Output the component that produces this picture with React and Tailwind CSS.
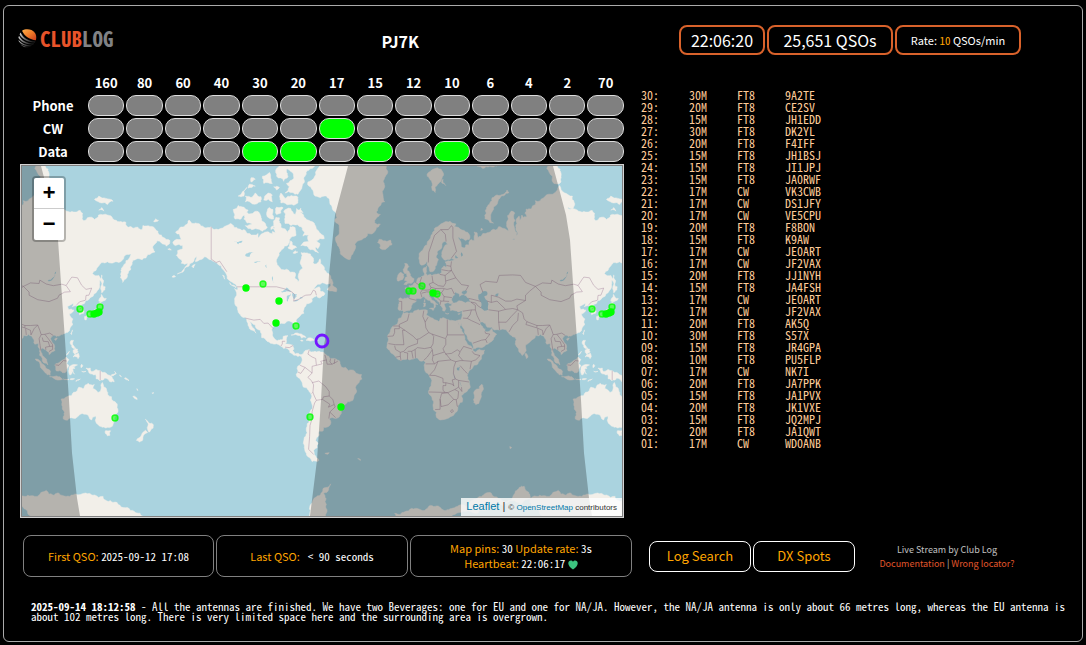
import React, { useState } from 'react';

const bands = ['160', '80', '60', '40', '30', '20', '17', '15', '12', '10', '6', '4', '2', '70'];

const modes = [
    { name: 'Phone', active: [] },
    { name: 'CW', active: ['17'] },
    { name: 'Data', active: ['30', '20', '15', '10'] },
];

const qsos = [
    ['30', '30M', 'FT8', '9A2TE'],
    ['29', '20M', 'FT8', 'CE2SV'],
    ['28', '15M', 'FT8', 'JH1EDD'],
    ['27', '30M', 'FT8', 'DK2YL'],
    ['26', '20M', 'FT8', 'F4IFF'],
    ['25', '15M', 'FT8', 'JH1BSJ'],
    ['24', '15M', 'FT8', 'JI1JPJ'],
    ['23', '15M', 'FT8', 'JA0RWF'],
    ['22', '17M', 'CW', 'VK3CWB'],
    ['21', '17M', 'CW', 'DS1JFY'],
    ['20', '17M', 'CW', 'VE5CPU'],
    ['19', '20M', 'FT8', 'F8BON'],
    ['18', '15M', 'FT8', 'K9AW'],
    ['17', '17M', 'CW', 'JE0ART'],
    ['16', '17M', 'CW', 'JF2VAX'],
    ['15', '20M', 'FT8', 'JJ1NYH'],
    ['14', '15M', 'FT8', 'JA4FSH'],
    ['13', '17M', 'CW', 'JE0ART'],
    ['12', '17M', 'CW', 'JF2VAX'],
    ['11', '20M', 'FT8', 'AK5Q'],
    ['10', '30M', 'FT8', 'S57X'],
    ['09', '15M', 'FT8', 'JR4GPA'],
    ['08', '10M', 'FT8', 'PU5FLP'],
    ['07', '17M', 'CW', 'NK7I'],
    ['06', '20M', 'FT8', 'JA7PPK'],
    ['05', '15M', 'FT8', 'JA1PVX'],
    ['04', '20M', 'FT8', 'JK1VXE'],
    ['03', '15M', 'FT8', 'JQ2MPJ'],
    ['02', '20M', 'FT8', 'JA1QWT'],
    ['01', '17M', 'CW', 'WD0ANB'],
];

// Coastlines as "lon,lat" rings
const land = [
    // Eurasia
    '-9,37 -9.5,38.7 -8.8,41.5 -9.2,43.1 -8,43.7 -4,43.4 -1.8,43.4 -1.2,44.8 -1.2,46 -2.5,47.3 -4.6,48 -4.6,48.6 -1.6,48.7 -1.9,49.7 -1.2,49.4 0.2,49.6 1.6,50.8 3.5,51.4 4.7,53 7,53.5 8.8,53.9 8.2,55.5 8.3,57 10.6,57.7 10.3,56.3 9.9,54.9 11,54 12.5,54.4 14.2,53.9 16.5,54.5 18.6,54.7 19.8,54.4 21,55.3 21.2,57 22.6,57.7 24.2,57.1 24.3,58.3 23.5,59.2 25.5,59.6 28,59.6 30,60 28,60.6 25,60.1 22.9,59.9 21.4,60.8 21.4,62.8 25.3,65 24,65.8 22,65.6 21.3,64.5 17.8,62.6 17.2,60.8 18.8,60 17.8,58.8 16.5,57.5 15.9,56.1 14.3,55.5 12.9,55.5 11.8,57.5 11,59 10.5,59.4 8.5,58.2 7,58 5.6,58.8 5,60.5 5.2,62 8.2,63.6 10.8,64.8 12.7,66.5 14.5,67.8 16,68.8 19,69.9 23,70.8 27,71 31,70.4 30,69.8 33,69.5 38,68.4 41,67 40.5,66.4 38,66.1 34,66.6 32.5,67.1 34.8,65 34.8,64.3 37,63.9 38,64.8 40,64.7 40.2,65.5 42,66.4 44,66.1 43.9,68.4 46,68.2 46.5,66.8 50,68 54,68.3 59,68.9 61,69.7 64.9,69.3 68.5,68.3 67,69.6 67,71 70,73.2 72.5,72.8 72.7,71.2 72.5,69 74,68.2 73.5,67 70.5,66.4 72.2,66.2 74.5,67.9 74,70.5 73.5,71.5 75.5,72.2 76,71.2 77.5,72.4 78.5,70.9 79,72 81,72 80.5,73.6 87,74.5 87,75.2 98,76.3 104,77.7 113,76 113.5,73.7 110,74 106,73 110,73.7 118.5,73.1 123.5,73 127,73.3 128.5,72 129,71.2 132,71.8 137,71.4 139.8,72.4 146,72.4 150,71.5 159,70.8 160,69.7 167.5,69.6 170.5,69 171,70 176,69.8 180,69 185,67 190,66.1 187.5,64.4 184,65.4 181,66 178,64.4 179.5,62.6 174.5,61.8 170.5,60 166.5,60.2 164,59.8 163,58 162.3,56.2 160,54.5 159.9,53.2 156.8,51 155.6,55 156,57 158.5,58.5 161,60.2 164,62.4 160,61.8 155,59.2 151,59.1 146,59.3 142,59 138,56 135.5,54.7 140,54 141.3,52.5 140.5,50 140,48 136,44.5 133,42.8 130.7,42.3 127.5,39.8 129.3,37.2 129.2,35.3 126.5,34.4 126.5,37 125,38 125,39.6 121.3,39 122,40.8 118,39.1 119,37.3 122.4,37.2 119.3,35 121.8,32 121,30 121.5,28.3 119.5,25.5 117,23.5 113.5,22.2 110,21 109.8,21.5 108,21.6 106,19.5 107.3,17 109,14 109.2,11.5 106.8,10.4 105,8.7 105,10.2 102.5,12 101,13 100,13.3 99.3,10.5 100.3,8.3 102.5,6.2 103.4,4 104.2,1.4 101.3,2.9 100.3,6 98.3,8.2 98.6,12 97.6,16.3 95,15.8 94.3,17 94.3,19 92,21.5 90.5,22.6 87,21.4 86.8,20.2 82.3,16.7 80.2,15.5 80.2,13 79.8,10.3 77.6,8 76.3,10 74.7,13.3 73,17 72.8,20.5 70.9,20.8 69,22.2 67.3,24 66.5,25.3 61.6,25.1 57.3,25.7 56.3,27 52.5,27.5 50,30.2 48,30 48,29.4 50,26.7 51.2,24.6 51.5,26 52,24.1 54.5,24.2 56.3,26.2 56.8,24.2 59.8,22.4 57.5,19 55,17 52,15.5 45,12.8 43.3,12.7 42.7,16 39,21 37.2,24.8 35,28 34.8,29.5 34.3,27.9 32.5,29.9 32.5,31.2 34.3,31.3 35.5,34 36,36.8 32.5,36.1 30.5,36.7 27.3,36.8 26.3,39.3 29,41 31.5,41.3 35,42 38,41 41.5,41.5 39,43.9 37,45 39,47.2 35,46.3 36.5,45.4 33.7,44.4 32.8,46 30.8,46.5 28.7,44 28,42.5 29,41.3 27,40.6 24,40.8 22.8,40.4 24,38 23,36.5 21.7,36.9 21,39 19.4,41.5 16,43.5 14.8,45 13.6,45.5 12.3,45.3 12.4,44.2 14,42.5 16,41.9 18.5,40.2 17,40.4 16.8,39 15.7,38 15.8,40 13.5,41.2 10.5,43 8.8,44.4 6.5,43.2 3.2,43.3 3.2,41.9 0.7,40.8 -0.3,39.3 -0.7,37.7 -2.2,36.8 -5.5,36.1 -6.4,36.9',
    // Africa
    '-6,35.8 -2,35.1 3,36.9 9.8,37.3 11,37 10.2,34.3 15,32.4 19,30.4 20,32.3 22,32.8 25,31.6 29,31 32.3,31.2 32.5,29.9 34,26.5 35.7,23.8 37.2,21 37.4,18.8 39.5,15.5 43,12.5 43.2,11.6 45,10.5 51.2,11.9 50.8,9.3 48,4.5 43,-0.2 40,-3.5 39,-6 40.6,-10.8 40.6,-15 36.9,-17.9 34.8,-19.8 35.5,-24 32.7,-26 32.4,-28.5 30,-31.3 26,-33.8 20,-34.8 18.4,-34 17.5,-30.5 15,-26.5 14.5,-22.5 11.8,-18 13.8,-11 12.2,-5.8 9,-1.2 9.7,3 8.5,4.6 5.8,4.3 4,6.3 -1.5,5 -4.5,5.2 -7.6,4.4 -11,6.5 -13.2,9 -16.6,12.3 -17.4,14.7 -16.3,19 -17,21 -14.8,25.5 -12.9,27.9 -9.8,29.8 -9.5,32 -6.8,34',
    '49.3,-12 50.4,-15.5 47.2,-24.8 45,-25.5 43.4,-22.5 44.4,-16.3 47.5,-15.2',
    // North America
    '-168,65.6 -162,66.4 -166,68.4 -163,69.5 -156.5,71.3 -150,70.5 -141,69.7 -136,69 -130,70 -127.5,70.5 -125,69.6 -118,69 -114,68 -108,68 -108,66.8 -105,68 -98,67.8 -98,68.5 -96,68.2 -97,70 -95.5,71.9 -93,71.8 -92,69.5 -90.5,69.3 -88,68.7 -87,67.4 -85.5,69.7 -82,69.5 -81.3,67.5 -86,66.3 -87,64.8 -91,63.5 -94.5,60.5 -94.7,58.8 -92.5,57 -88,56.5 -82.3,55.2 -82.2,52.9 -80,51.2 -79,52 -79.5,54.6 -76.6,57 -78.5,58.8 -77.5,60.5 -77.8,62.4 -73.5,62.3 -70,61 -69.5,59 -67,58.5 -64.5,60.3 -61.8,57.5 -60,55.3 -57,53.7 -55.8,52 -60,50.2 -66,50.2 -70,47 -65,49 -64.5,47 -61,45.7 -65,43.6 -67,44.8 -70.5,43.3 -70,41.7 -74,40.6 -75.8,37.5 -75.8,35.3 -78.5,33.8 -81.3,31.3 -80.1,27 -80.5,25.2 -81.8,26 -82.7,28.5 -84,30 -88,30.3 -89.3,29.2 -91.5,29.4 -94.5,29.4 -97.3,27.5 -97.7,23 -96.3,19.3 -94.5,18.2 -91,18.7 -90.4,21 -87,21.5 -88,18 -88.8,15.9 -83.3,15 -83.7,11.5 -82,9 -79.5,9.5 -77.5,8.6 -77.8,7.5 -80,7.3 -83,8.3 -85.8,10.2 -87.6,13 -92,14.4 -95,16.1 -97,15.9 -101.5,17.7 -105.5,20.2 -105.5,22.6 -109,26 -112.5,29.7 -114.8,31.8 -112.8,28 -109.5,23.1 -112,25 -115,28 -115.9,30.5 -117.3,33 -120.6,34.6 -122.5,37.5 -124.3,40.4 -124,44 -124.6,48.2 -122.5,47.5 -123,49.2 -127.5,51.5 -130.3,54.5 -134,57.8 -137,58.9 -141,60 -146,61 -149,60 -152,59.3 -151,61.2 -154,59 -157,57.5 -162,55.2 -164.8,54.6 -160,56 -157.5,58.7 -162,58.7 -162,60 -165.5,61.5 -164.5,63.1 -161,63.6 -161,64.6 -166.3,64.6',
    '-90,73 -89,70.5 -85,70 -79,69.8 -76,68.6 -72.5,67.6 -72.5,65.8 -78,64.5 -74,64.5 -70,63.4 -68,62.8 -65.5,62.3 -68,64 -66,63.6 -64.5,65.2 -67,66 -61.5,66.6 -64,68 -67,69.2 -71,71 -74,71.4 -77,72.7 -81,73.7 -82,72.5 -85,73.7',
    '-105,68.6 -115,69.3 -117,70 -112,70.4 -118,71.5 -117,73 -112,72.7 -108,73.1 -105,71 -101.5,69.6',
    '-124,71.5 -125.5,73.5 -122,74.3 -115,73.4 -120,71.5',
    '-97,71.5 -102,72.5 -100,73.9 -97.5,73.5',
    '-95,72.5 -95,74 -90.5,73.9 -92,72.8',
    '-80,74.8 -86,74.5 -92,74.8 -92,76.5 -89,75.6 -80,75.8',
    '-106,75 -112,74.6 -117,75 -117,76 -112,75.8 -110,76.5 -106,75.9',
    '-98,75 -104,75.3 -101,76.5 -98,76.2',
    '-80,76.3 -84,76.6 -89,76.5 -86,77.5 -88,78 -83,78.7 -86,79.8 -92,80.5 -90,83 -60,83 -65,81 -71,80 -75,79 -77,77.6',
    '-87,79 -90,78.3 -95,79 -95,80 -91,81.3 -88,80.4',
    '-104,78 -98,78 -100,79.5 -105,79',
    '-113,78.2 -110,78.6 -113,78.8',
    '-122,76 -116,77.4 -118,76',
    '-115,77.3 -110,77.6 -114,77.9',
    '-95,77 -97,77.5 -93,77.4',
    '-99,69 -96,69.4 -98,69.9',
    '-76.5,67.3 -73.5,67.6 -75,68.3',
    '-79.5,73.2 -76.3,72.9 -78,73.8',
    '-87,64 -84,63.2 -81,64 -84,65 -85,66',
    '-83.5,62.3 -80,62.6 -82,63',
    '-59.3,47.7 -57,50.5 -55.6,51.5 -55.8,49.8 -53,48.5 -53,46.7 -55.5,47',
    '-128,50.9 -124,49.3 -123.5,48.4 -126,49.4',
    '-133,54.1 -131.8,53.8 -131.5,52.4',
    '-154.5,57.5 -152.3,58.3 -153.5,57',
    '-166,53.5 -168.5,53.3 -167,54',
    '-171.5,63.5 -169,63.2 -170,63.7',
    // Caribbean
    '-84.8,21.9 -82,23.2 -79,22.7 -74.3,20.3 -77.5,19.9 -78,21 -81.8,22.3',
    '-74.3,18.5 -73,19.9 -69.8,19.7 -68.5,18.5 -71.3,17.9',
    '-78.2,18.3 -76.3,18.1 -77.2,17.8',
    '-67.1,18.4 -65.7,18.3 -67,18',
    // Greenland, Iceland
    '-73,78.2 -68,76 -60,76 -56,74 -54,71 -51,69.5 -53.5,67 -52,64.5 -49,61.5 -44,60 -43,60.2 -41,62.5 -40,65 -35,66.3 -31,68 -26,68.5 -22,70.3 -26,70.6 -22,72.5 -25,73 -19,75 -20,77 -18,80 -18,83 -60,83 -66,80',
    '-22.5,63.9 -18.5,63.4 -14,64.8 -15,66.2 -20,66 -23,66.4 -24,65.5 -22,64.8',
    // South America
    '-77.5,8.6 -75.5,10.8 -72,12.2 -71.5,10.8 -68,11 -64,10.4 -61.5,10 -60,8.4 -57,6 -52,4.8 -50,1.5 -49.5,0 -44.5,-2.7 -40,-3 -35.3,-5.3 -35,-8.5 -39,-13 -39,-17.8 -41,-22 -45,-23.5 -48.6,-26 -49,-28.8 -53.5,-34 -58,-34.3 -56.8,-36.5 -58,-38.2 -62,-39 -62.3,-41 -65,-41 -65,-43 -67.5,-46 -65.8,-47.3 -69,-50.5 -68.5,-52.3 -65.3,-54.8 -70,-55.2 -74,-52.5 -75.5,-48 -73.5,-42 -73.5,-37 -71.5,-30 -70.2,-20 -76.2,-14 -79.8,-7.5 -81.2,-5 -80,-2.5 -80,0.7 -77.3,3.8',
    '-61,-51.8 -58,-51.5 -59,-52.2',
    '-38,-54 -36,-54.4 -36.2,-54.8',
    // British Isles
    '-5.5,50.1 -3,51.4 -5,51.8 -4.3,53.2 -3,53.5 -3.5,54.8 -5,54.8 -6,56.5 -5,58.6 -3,58.5 -2,57.5 -3.2,56 -1.5,55 0.3,53 1.7,52.6 1,51.2 -2,50.7',
    '-10,51.6 -9.8,54 -7.5,55.3 -5.6,54.5 -6.3,52.3',
    // Arctic islands
    '11,79 14,77.5 16.5,76.6 19,78 22,79.5 18,80.1 14,79.8',
    '21,78.1 24,77.7 22,78.6',
    '51.5,71.6 55,70.7 57.5,70.6 55.5,72.4 57.5,74 61,75.4 68.5,76.6 67,77 60,76.2 55,74.8 52.5,72.8',
    '46,80.3 50,80 60,80.3 52,80.8',
    '99,79 95,80 98,80.8 105,79 105,78.2 100,78',
    '137,75.4 142,74.8 150,75.1 145,75.6 140,76',
    '140,73.4 143.5,73.2 142,73.9',
    '178.5,71 182,71.2 180,71.6',
    '48.5,68.8 50,69 49,69.4',
    // Mediterranean islands
    '12.5,38 15.5,38.2 15,36.8',
    '8.3,39 8.3,41 9.7,41 9.5,39.2',
    '8.7,41.6 9.3,42.9 9.4,41.6',
    '23.6,35.4 26.2,35.2 24.8,34.9',
    '32.4,34.9 34.3,35.5 33.5,34.7',
    // East Asia
    '142,54.2 143.2,52 143.3,49.2 144.5,49 142.8,46.6 142,46.1 142,50',
    '140,42 140.5,43.4 141.8,45.4 145.3,43.4 143.2,42.1',
    '140,41 141.4,41.3 142,39.5 140.8,36 140,35.2 137,34.7 135.8,33.5 135,34.6 131,34 132.5,35.5 136,35.8 137,37.4 139.5,38.4',
    '130,33.4 131.8,33.5 131.2,31.4 130.2,31.4',
    '132.5,33.8 134.5,34.2 133.2,33',
    '120.2,23 121.5,25.2 120.9,22.2',
    '108.8,19.2 110.8,20 109.8,18.3',
    '120.5,18.4 122.2,18.4 121.5,15.8 124,13 121,13.8 120,16',
    '122,11.8 125,12.5 125.5,10.5 123,9.2',
    '122,7 125.5,9.8 126.3,7.2 125.4,5.8 124,7.2',
    '117.2,8.4 119.3,11 119,10.3',
    '79.8,8 80.3,9.7 81.8,7.5 80.6,6',
    // Indonesia, New Guinea
    '109,1.5 111.3,2.6 114,4.6 117,7 119,5.2 117.5,2.5 119,1 116.3,-4 114.5,-4 110.2,-2.8',
    '95.3,5.6 97.5,5.2 100.5,2.2 104,-1.5 106,-3 105.8,-5.8 102.2,-4 98.7,1.6',
    '105.3,-6.8 108.5,-6.7 112.5,-6.8 114.5,-8.6 108,-7.8',
    '115,-8.4 119,-8.4 119,-8.9 116,-8.9',
    '120,-8.3 123,-8.3 120,-8.9',
    '124,-9.3 127,-8.4 124,-10.2',
    '119.5,-5.5 118.8,-2.8 120,0.8 125,1.5 121,0.3 123.3,-0.9 121.6,-1.5 123,-5 121,-2.8 120.4,-5.5',
    '127.5,-0.5 128,2 128.7,1',
    '128,-3 131,-3 129,-3.5',
    '131,-0.8 134,-0.8 135,-3.3 138,-1.7 141,-2.6 145,-4.3 147.8,-6 150.8,-10.4 147,-9.2 144,-7.7 143,-9.2 138,-8.2 137.8,-5.3 133,-4',
    '148.5,-5.8 152,-4.2 151,-3 152.3,-4.8 150,-6.3',
    '154.7,-5.5 156,-6.8 155,-6.4',
    '158,-7.8 161,-9.8 159,-8.8',
    '164,-20.2 167,-22.3 165,-21.5',
    '177.3,-18 178.7,-17.8 178,-18.3',
    '166.8,-15 167.5,-16.4 167,-16',
    // Australia, New Zealand
    '113.5,-22 114,-26 115.8,-32 115,-34.3 118,-35 123.5,-34 126,-32.3 131,-31.5 135,-34.8 137.8,-32.5 137.5,-35 140,-38 143.5,-38.8 146.3,-39 150,-37.5 151.5,-33 153.5,-29 153,-25.5 149,-20.5 146.2,-18.8 145.3,-15 143.5,-14 142.5,-10.8 141.5,-13 141,-17 139.5,-17.6 135.8,-15 136.8,-12.2 132.5,-11.3 130.5,-12.5 129.5,-15 126,-14 122.2,-17.5 121,-19.6 117,-20.7',
    '144.7,-40.8 148.3,-40.9 147.8,-43.2 146,-43.5',
    '172.7,-34.5 175.3,-36.6 178.4,-37.7 176.5,-40.5 175.2,-41.6 174,-39.2 174.8,-37.5',
    '172.7,-40.6 174.2,-41.8 171,-44.3 170.5,-46 168.5,-46.6 166.5,-45.8 170,-43',
    '69,-48.7 70.3,-49.2 69.2,-49.7',
    // Antarctica
    '-14,-75 -12,-71.2 -5,-70.8 0,-70 10,-70.2 25,-70.3 33,-69.3 38,-69.5 45,-67.7 49,-67 52,-66 56,-66 58,-67 70,-68 77,-69 80,-67.8 85,-67 90,-66.6 95,-66.9 98,-66.5 101,-65.6 103,-65.2 105,-66.3 112,-66 117,-66.9 122,-66.5 130,-66 137,-66.5 143,-66.9 150,-68.5 160,-69.8 165,-70.7 172,-72 172,-75',
    '-78,-75 -72,-71.8 -71,-69 -67,-67 -62,-64.5 -57,-63.2 -62,-66 -60,-69 -60,-75',
];

const lakes = [
    '47,45.5 50,46.8 53,46.7 53,45 51,44.3 53.5,41.5 53.8,37.3 51,36.7 49,38 49,41',
    '-92,46.7 -88,48.7 -84.6,46.7 -88,46.9',
    '-87.8,42 -87.8,44.5 -85,46 -86.3,43.5 -87,41.7',
    '-84,46 -80.5,45.7 -82.3,43 -83.5,44',
    '-83.3,41.8 -79,42.8 -81.5,41.8',
    '-79.5,43.3 -76.3,44 -78,43.3',
    '104,51.6 108,53.2 110,55.6 109,53.5 106,51.6',
    '31.8,-0.5 34,0.3 33.5,-2.5 32,-2.3',
    '30.8,60.5 32.8,60.6 31,61.6',
    '35,61 36,61.5 34.7,62.5',
    '58.5,45 61,46 60,44.2',
    '-98,53.8 -96.4,50.6 -97.5,52',
    '-117,61.3 -111,62.6 -114,61',
    '-125,66 -119,66 -122,65',
    '-103,57.8 -101.8,57 -102.3,58.3',
    '-111,59.2 -106,59.4 -110,58.8',
    '29.2,-3.8 30.7,-8.5 29.6,-5.5',
    '34,-10 35,-14 34.3,-12',
];

const borders = [
    '-123,49 -95,49 -89,48 -84,46.5 -82.5,45.3 -83,42 -79,43 -76,44.5 -74.5,45 -71,45.2 -69.2,47.4 -67.8,47 -67,45',
    '-141,69.7 -141,60.2 -137.5,59 -135,59.5 -130,55.5',
    '-117,32.5 -111,31.3 -106.5,31.7 -104,29.3 -101,29.5 -97.3,26',
    '-92,14.5 -91,16 -91,17.8 -89,17.8',
    '-89,13.8 -86,13.5 -83.3,15',
    // South America
    '-72,12 -73,9 -70,7 -67.5,6 -67,1.2 -70,0.5 -70,-4.2 -75,-0.3 -78.5,1.2',
    '-80,-3.5 -78,-4.5 -75,-0.3',
    '-67,1.2 -63,2.2 -64,4 -60,5 -61,8.4',
    '-60,5 -59.5,2 -56,2 -52,4',
    '-57,6 -57.5,3.5 -56,2',
    '-54,5.7 -54.5,2.3',
    '-70,-4.2 -73,-7.3 -70.5,-9.5 -69,-12.5 -69.5,-17.5 -70.3,-18.3',
    '-70,-11 -65.3,-9.8 -60.5,-13.7 -58,-17 -58,-20 -62,-20.5 -62.7,-22.2 -67,-22.8 -68.5,-20 -69.5,-17.5',
    '-67,-22.8 -68.3,-24.5 -70,-30 -70,-34 -71.5,-38 -71.8,-44 -72.5,-50 -69,-52.2',
    '-58,-20 -55.5,-22.2 -54.5,-25.5 -58.6,-27.2 -57.6,-25.3 -62.7,-22.2',
    '-54.5,-25.5 -53.8,-27 -57.6,-30.2 -58.3,-34',
    '-57.6,-30.2 -53.5,-33.5',
    // Africa
    '-8.7,27.7 -8.7,28.7 -3,31 -1.8,35',
    '-13,27.7 -8.7,27.7 -8.7,26 -12,26 -12,23.5 -13,21.3 -17,21',
    '-8.7,27.3 -4.8,25 1.2,21 3.2,19 5.5,19.5 12,23.5 10,26.5 9.5,30 7.8,33.5 8.5,36.8',
    '9.5,30 11.5,33',
    '-4.8,25 -6.5,25 -5.5,15.5 -11.5,15.5 -16.3,16.2',
    '4.2,19 4,16.2 0.3,15 -3,13.7 -5.5,11 -8,10.3 -11.3,12.2 -12,14.8',
    '-8,10.3 -8,7.5 -11.3,6.9',
    '-8,7.5 -7.5,4.5',
    '-5.5,10.3 -2.8,9.8 -3,5.2',
    '-2.8,11 0,11 1,6',
    '0,11 2.4,12.2 2.7,6.4',
    '2.4,12.2 4,13.5 9,12.8 13.6,13.7 15,16 15.5,21 14.2,22.6 12,23.5',
    '14.2,22.6 24,19.5 24,15.7 22,12.7 23,10.5 15,8 14.5,12 13.6,13.7',
    '25,31.6 25,22 37,22',
    '25,22 24,20',
    '14.5,12 11,7 8.6,4.8',
    '15,8 14.5,5 16,2.2 9.8,2.2',
    '16,2.2 18.5,4 27.5,5 23,10.5',
    '27.5,5 31,3.7 34,4.5 36,4.5 33,8 34,10.7 36.5,14.3 42.5,12.5',
    '23.5,9 28,9.5 32,12 34,10.7',
    '36,4.5 42,4 45,5 48,8 44,9 42.5,11',
    '42,4 41,-1.5',
    '34,1 37.5,-3 39.3,-4.7',
    '31,3.7 29.7,0 29.3,-4.5 30.7,-8.4 33,-9.4 40.3,-10.5',
    '18.5,4 16,-2 12.5,-5.8',
    '12.5,-5.8 16.5,-6 19.5,-7 22,-8 22,-11 24,-11 24,-13 22,-13 22,-16.2 23.5,-17.6 12,-17.3',
    '24,-11 28.5,-12 29.7,-13.3 28.5,-9 30.7,-8.4',
    '33,-9.4 33,-14 30.3,-15.6 25.3,-17.8 23.5,-17.6',
    '35,-14 35.3,-17 33,-14',
    '30.3,-15.6 33,-17 32.5,-21.5 31.3,-22.4 29.5,-22.2 25.3,-17.8',
    '29.5,-22.2 25.5,-25.7 20.7,-26.8 20,-22 21,-18.3 25.3,-17.8',
    '20,-22 20,-28.5 16.5,-28.6',
    '31.3,-22.4 32,-26.5 32.7,-27',
    '27.3,-29.5 28.6,-28.7 29.3,-29.8 28,-30.5 27.3,-29.5',
    // Europe
    '-7,37.2 -7,41.8 -8.8,41.9',
    '-1.8,43.3 3.2,42.4',
    '2.5,51 6,49.5 8.2,49 7.5,47.6 6.2,46.3 7.2,44',
    '7,53.3 6,51.5 6,49.5',
    '7.5,47.6 10,47.4 13,47.6 13.5,48.8 12.2,50.3 15,51 14.3,53.8',
    '7,46 10.5,46.6 13.7,46.5 16.2,47 17,48.2 13.5,48.8',
    '15,51 18.8,49.5 22.5,49.2 24,50.8 23.5,54 19.8,54.4',
    '17,48.2 22,48.3 24.8,47.8 28,48.3 30,45.5',
    '16.2,47 18.8,45.8 21,46.2 22.8,48',
    '21,46.2 22.7,44.3 28.3,43.8',
    '22.7,44.3 22.5,42 26.3,41.8',
    '22.5,42 20.5,42 20,40',
    '18.8,45.8 16,45 19,43 20.5,42',
    '23.5,54 28,56 31,53 24,51.6',
    '31,53 35,50 40,49.5 38,47.2',
    '21,56.3 26,55.8 28,56 27.5,57.6 24.5,57.9',
    '27.5,57.6 28,59.4',
    '28,60.6 31.5,62.8 29,66.8 29,69.5',
    '24.2,65.8 23.6,67.8 20.5,69 16,67.5 14,65 12,62.5 11.7,59',
    '20.5,69 25.7,69 28,70 29,69.5',
    // Asia
    '40,43.4 44,42.7 48.5,41.8',
    '41.5,41.5 45,41 46.5,39.5 48.7,38.4',
    '36,36.5 42,37.2 44.8,37.2 44.8,39.7 41.5,41.5',
    '42,37.2 41,34.4 39,32.3 36,32.5',
    '44.8,37.2 46,34 48,30.5',
    '39,32.3 42,31 46.5,29.2 48,28.5',
    '43,16.5 49,18.5 52,19 55,22.5 52,23 51.5,24.3',
    '52,19 53,16.7',
    '50,46.5 48,50 52,51.5 60,51 61.5,54 71,54.2 76.5,54 80,51 87,49.2 83,47 80,45 80,42.3 74,43 70,42 66,42 61,44 56,45 56,41.3 53,42',
    '56,41.3 60,42 66,37.5 61.3,36.5 54,37.3',
    '66,37.5 71,38 74.5,37.3 74,39.5 80,42.3',
    '61,36.5 61,31.5 61.7,25.2',
    '61,30 66.5,30 70,33.5 74.5,37.3 78,35.5 79,32 81,30.3 88,28 92,28 97,28.3',
    '68.5,24 71,28 74.5,31 75,35.5',
    '81,30.3 80.3,28.6 88,26.5 88,28',
    '88.5,26.3 89,22',
    '88.5,26.3 92,25 92.3,22',
    '92.3,22 94.5,26 97,28.3 98.5,25 99.5,22.2 98,19.5 98.7,15 99.3,11.5',
    '99.5,22.2 102,22.4 105.5,23.2 108,21.6',
    '102,22.4 104.5,19.5 107.5,15.5 107.5,12.3 105,10.8',
    '100.2,20.3 101,17.8 104.5,17.5 105.5,14.3 102.5,13.8 102.8,12',
    '105.5,14.3 107.5,14.5',
    '87,49.2 92,50.8 98,50.5 98.5,52 103,50.3 108,49.5 114,50.2 117,49.6 120,52.5 121,53.3 125,53 128,49.7 131,47.8 135,48.4 133,45 131,44.9 130.7,42.5',
    '87,49.2 91,46.5 91,45 97,42.7 105,41.7 111,43.5 112,45 116,46.5 120,46.7 117,49.6',
    '130.5,42.4 126.5,41.6 124.5,40',
    '126.7,37.8 128.4,38.5',
    '109.5,1.5 112,1.2 115,4.5 117.5,4.2',
    '141,-2.6 141,-9.1',
];

const WORLD = 512;

// Web mercator at zoom 1
const project = ([lon, lat]) => {
    const rad = (lat * Math.PI) / 180;
    return [
        389.7 + (lon * WORLD) / 360,
        201 - (WORLD / (2 * Math.PI)) * Math.log(Math.tan(Math.PI / 4 + rad / 2)),
    ];
};

// Stable pseudo random value between -0.5 and 0.5
const noise = (x, y) => {
    const n = Math.sin(x * 12.9898 + y * 78.233) * 43758.5453;
    return n - Math.floor(n) - 0.5;
};

// Split long edges and nudge the midpoints so coasts are not ruler straight
const roughen = (a, b) => {
    const dx = b[0] - a[0];
    const dy = b[1] - a[1];
    if (Math.hypot(dx, dy) < 2.5) return [a];
    const k = noise(a[0] + b[0], a[1] + b[1]) * 0.42;
    const mid = [(a[0] + b[0]) / 2 - dy * k, (a[1] + b[1]) / 2 + dx * k];
    return [...roughen(a, mid), ...roughen(mid, b)];
};

const toPath = (rings, coast) =>
    rings
        .map(ring => {
            let points = ring.split(' ').map(pair => project(pair.split(',').map(Number)));
            if (coast) {
                points = points.flatMap((p, i) => roughen(p, points[(i + 1) % points.length]));
            }
            const d = points.map(([x, y]) => `${x.toFixed(1)} ${y.toFixed(1)}`).join('L');
            return `M${d}${coast ? 'Z' : ''}`;
        })
        .join('');

const landPath = toPath(land, true);
const lakePath = toPath(lakes, true);
const borderPath = toPath(borders, false);

const pins = [
    { x: 224, y: 122, solid: true },
    { x: 241, y: 118 },
    { x: 257, y: 135, solid: true },
    { x: 254, y: 157, solid: true },
    { x: 274, y: 160 },
    { x: 387, y: 125 },
    { x: 391, y: 125 },
    { x: 400, y: 120 },
    { x: 411, y: 127, solid: true },
    { x: 415, y: 128 },
    { x: 288, y: 251 },
    { x: 319, y: 241, solid: true },
    { x: 93, y: 252 },
    ...[0, WORLD].flatMap(shift => [
        { x: 58 + shift, y: 143 },
        { x: 78 + shift, y: 141 },
        { x: 68 + shift, y: 148 },
        { x: 72 + shift, y: 148, solid: true },
        { x: 75 + shift, y: 147, solid: true },
        { x: 77 + shift, y: 146, solid: true },
    ]),
];

const WorldMap = () => (
    <svg
        viewBox="0 0 600 350"
        preserveAspectRatio="xMidYMid slice"
        className="block h-[350px] w-full bg-[#aad3df]"
        role="img"
        aria-label="QSO map"
    >
        <defs>
            <g id="world">
                <path d={landPath} fill="#f2efe9" stroke="#f2efe9" strokeWidth="0.5" strokeLinejoin="round" />
                <path d={lakePath} fill="#aad3df" />
                <path d={borderPath} fill="none" stroke="#a98aa0" strokeWidth="0.6" strokeOpacity="0.8" />
            </g>
        </defs>
        <use href="#world" x={-WORLD} />
        <use href="#world" />
        <use href="#world" x={WORLD} />

        {/* grey line */}
        <path
            d="M0 0H19L32 49L36 74L43 174L47 234L50 287L55 332L58 350H0Z"
            fill="#000"
            fillOpacity="0.25"
        />
        <path
            d="M326 0H531L544 49L548 74L555 174L559 234L562 287L567 332L570 350H288L290 334L295 294L297 264L299 234L302 179L303 174L307 109L313 49Z"
            fill="#000"
            fillOpacity="0.25"
        />

        {pins.map((pin, i) => (
            <circle
                key={i}
                cx={pin.x}
                cy={pin.y}
                r="3"
                fill="#00ff00"
                fillOpacity={pin.solid ? 1 : 0.6}
                stroke="#00ff00"
                strokeOpacity={pin.solid ? 1 : 0.8}
                strokeWidth="1.4"
            />
        ))}
        <circle cx="300" cy="175" r="6" fill="none" stroke="#7316ff" strokeWidth="2.8" />
    </svg>
);

const Logo = () => (
    <a href="#home" aria-label="Club Log" className="flex items-center gap-[3px] pb-1">
        <svg viewBox="0 0 19 19" className="h-[19px] w-[19px]" aria-hidden="true">
            <defs>
                <linearGradient id="sun" x1="0" y1="0" x2="1" y2="1">
                    <stop offset="0" stopColor="#ffb04a" />
                    <stop offset="0.5" stopColor="#f07a28" />
                    <stop offset="1" stopColor="#c83a1c" />
                </linearGradient>
                <linearGradient id="steel" x1="0" y1="0" x2="1" y2="0.6">
                    <stop offset="0" stopColor="#d8d8d8" />
                    <stop offset="0.5" stopColor="#777" />
                    <stop offset="1" stopColor="#222" />
                </linearGradient>
            </defs>
            <path d="M4 1.8C8 -0.6 14 0 16.8 3.8C18.4 6 18.5 8.7 17.9 11.2C12 10.8 6.8 7.8 4 1.8Z" fill="url(#sun)" />
            <path d="M2.6 3.6C4.8 8.6 10 12.2 17.4 12.6L17 13.4C9.4 13.6 3.6 9.8 1.6 5.2Z" fill="url(#steel)" />
            <path d="M1 6.8C3 11.2 8.6 14.6 16 14.6L15.2 15.5C8 16 2.4 12.6 0.4 8.8Z" fill="url(#steel)" />
            <path d="M0.5 11C3.4 14.8 8 16.6 14 16.4L12.6 17.3C7.6 17.8 3 15.8 0.9 12.6Z" fill="url(#steel)" />
            <path d="M2.6 15.2C5 17.2 8 18 11 17.9C8 19 4.6 18 2.6 15.2Z" fill="url(#steel)" />
        </svg>
        <span className="font-[Noto_Sans_Mono_CJK_JP,Liberation_Mono,monospace] text-[21px] leading-5 font-bold">
            <span className="text-[#e8532a]">CLUB</span>
            <span className="text-[#808285]">LOG</span>
        </span>
    </a>
);

const Stat = ({ className, children }) => (
    <div className={`flex h-[30px] items-center justify-center rounded-lg border-2 border-[#d9622b] text-white ${className}`}>
        {children}
    </div>
);

const InfoBox = ({ children }) => (
    <div className="flex h-[42px] items-center justify-center rounded-lg border border-[#808080] text-center text-[11px] leading-[15px] text-white">
        <div>{children}</div>
    </div>
);

const Label = ({ children }) => <span className="text-[#ffa500]">{children}</span>;

const Mono = ({ children }) => (
    <span className="font-[Noto_Sans_Mono_CJK_JP,Liberation_Mono,monospace] whitespace-pre">{children}</span>
);

const BandTable = () => (
    <div className="-mr-0.5">
        <table className="w-full table-fixed border-separate border-spacing-[2px] text-[13px] leading-[17px] text-white">
            <thead>
                <tr>
                    <th className="w-16"></th>
                    {bands.map(band => (
                        <th key={band} scope="col" className="p-0 pb-0.5 font-bold">{band}</th>
                    ))}
                </tr>
            </thead>
            <tbody>
                {modes.map(mode => (
                    <tr key={mode.name} className="h-[21px]">
                        <th scope="row" className="p-0 pr-0.5 font-bold">{mode.name}</th>
                        {bands.map(band => (
                            <td
                                key={band}
                                className={`rounded-[10px] border border-[#dddddd] p-0 ${mode.active.includes(band) ? 'bg-[#00ff00]' : 'bg-[#808080]'}`}
                            ></td>
                        ))}
                    </tr>
                ))}
            </tbody>
        </table>
    </div>
);

const MapPanel = () => {
    const zoomButton = 'block h-[31px] w-[30px] bg-white text-center font-["Liberation_Mono",monospace] text-[22px] leading-[34px] font-bold text-black';

    return (
        <div className="border border-[#d3d3d3]">
            <div className="relative border border-[#808080]">
                <WorldMap />
                <div className="absolute top-2.5 left-2.5 divide-y divide-[#cccccc] overflow-hidden rounded-sm border-2 border-black/25">
                    <button type="button" aria-label="Zoom in" className={zoomButton}>+</button>
                    <button type="button" aria-label="Zoom out" className={zoomButton}>−</button>
                </div>
                <div className="absolute right-0 bottom-0 bg-white/80 px-[5px] font-[Liberation_Sans,Arial,sans-serif] text-[8px] leading-4 text-[#333333]">
                    <a href="#leaflet" className="text-[11px] text-[#0078a8]">Leaflet</a>
                    <span className="text-[11px]"> | </span>
                    © <a href="#osm" className="text-[#0078a8]">OpenStreetMap</a> contributors
                </div>
            </div>
        </div>
    );
};

const LogTable = () => (
    <table className="font-[Noto_Sans_Mono_CJK_JP,Liberation_Mono,monospace] text-[12px] leading-3 text-[#ffcc99]">
        <tbody>
            {qsos.map(([n, band, mode, call]) => (
                <tr key={n}>
                    <td className="w-12 p-0">{n}:</td>
                    <td className="w-12 p-0">{band}</td>
                    <td className="w-12 p-0">{mode}</td>
                    <td className="p-0">{call}</td>
                </tr>
            ))}
        </tbody>
    </table>
);

const App = () => {
    const [heartbeat] = useState('22:06:17');

    return (
        <div className="min-h-screen bg-black px-[3px] pt-[5px] pb-[3px] font-[Noto_Sans_CJK_JP,sans-serif]">
            <main className="rounded-md border border-[#aaaaaa] px-4 pt-[19px] pb-5">
                <header className="-ml-0.5 flex items-center pr-[45px]">
                    <Logo />
                    <h1 className="flex-1 pt-0.5 pl-2 text-center text-base leading-6 font-bold text-white">PJ7K</h1>
                    <div className="flex gap-0.5">
                        <Stat className="w-[86px] text-base">22:06:20</Stat>
                        <Stat className="w-[126px] text-base">25,651 QSOs</Stat>
                        <Stat className="w-[126px] text-[11px]">
                            <span>Rate: <span className="text-[#ffa500]"><Mono>10</Mono></span> QSOs/min</span>
                        </Stat>
                    </div>
                </header>

                <div className="mt-[17px] grid grid-cols-[minmax(0,604fr)_minmax(0,425fr)] gap-[17px]">
                    <div>
                        <BandTable />
                        <MapPanel />
                    </div>
                    <div className="pt-[17px]">
                        <LogTable />
                    </div>
                </div>

                <div className="mt-[17px] flex items-center gap-[17px] pl-[3px]">
                    <div className="grid flex-1 grid-cols-[191fr_192fr_222fr] gap-0.5">
                        <InfoBox><Label>First QSO:</Label> <Mono>2025-09-12 17:08</Mono></InfoBox>
                        <InfoBox><Label>Last QSO:</Label> <Mono>{' < 90 seconds'}</Mono></InfoBox>
                        <InfoBox>
                            <Label>Map pins:</Label> <Mono>30</Mono> <Label>Update rate:</Label> <Mono>3s</Mono>
                            <br />
                            <Label>Heartbeat:</Label> <Mono>{heartbeat}</Mono>{' '}
                            <svg viewBox="0 0 10 10" className="inline-block h-2.5 w-2.5" aria-hidden="true">
                                <path d="M5 9.6C2 7.4 0.3 5.4 0.3 3.2C0.3 0.4 3.8 -0.4 5 1.8C6.2 -0.4 9.7 0.4 9.7 3.2C9.7 5.4 8 7.4 5 9.6Z" fill="#3cc480" />
                            </svg>
                        </InfoBox>
                    </div>
                    <div className="flex gap-0.5">
                        <button type="button" className="h-[31px] w-[102px] rounded-lg border border-white text-[13px] text-[#ffa500]">Log Search</button>
                        <button type="button" className="h-[31px] w-[102px] rounded-lg border border-white text-[13px] text-[#ffa500]">DX Spots</button>
                    </div>
                    <div className="w-[194px] pt-0.5 pr-[44px] text-center text-[9px] leading-[14px] text-[#c0c0c0]">
                        Live Stream by Club Log
                        <br />
                        <a href="#docs" className="text-[#e0562b]">Documentation</a> | <a href="#locator" className="text-[#e0562b]">Wrong locator?</a>
                    </div>
                </div>

                <p className="mt-6 pl-[11px] font-[Noto_Sans_Mono_CJK_JP,Liberation_Mono,monospace] text-[11px] leading-[10px] text-white">
                    <b>2025-09-14 18:12:58</b> - All the antennas are finished. We have two Beverages: one for EU and one for NA/JA. However, the NA/JA antenna is only about 66 metres long, whereas the EU antenna is about 102 metres long. There is very limited space here and the surrounding area is overgrown.
                </p>
            </main>
        </div>
    );
};

export default App;
